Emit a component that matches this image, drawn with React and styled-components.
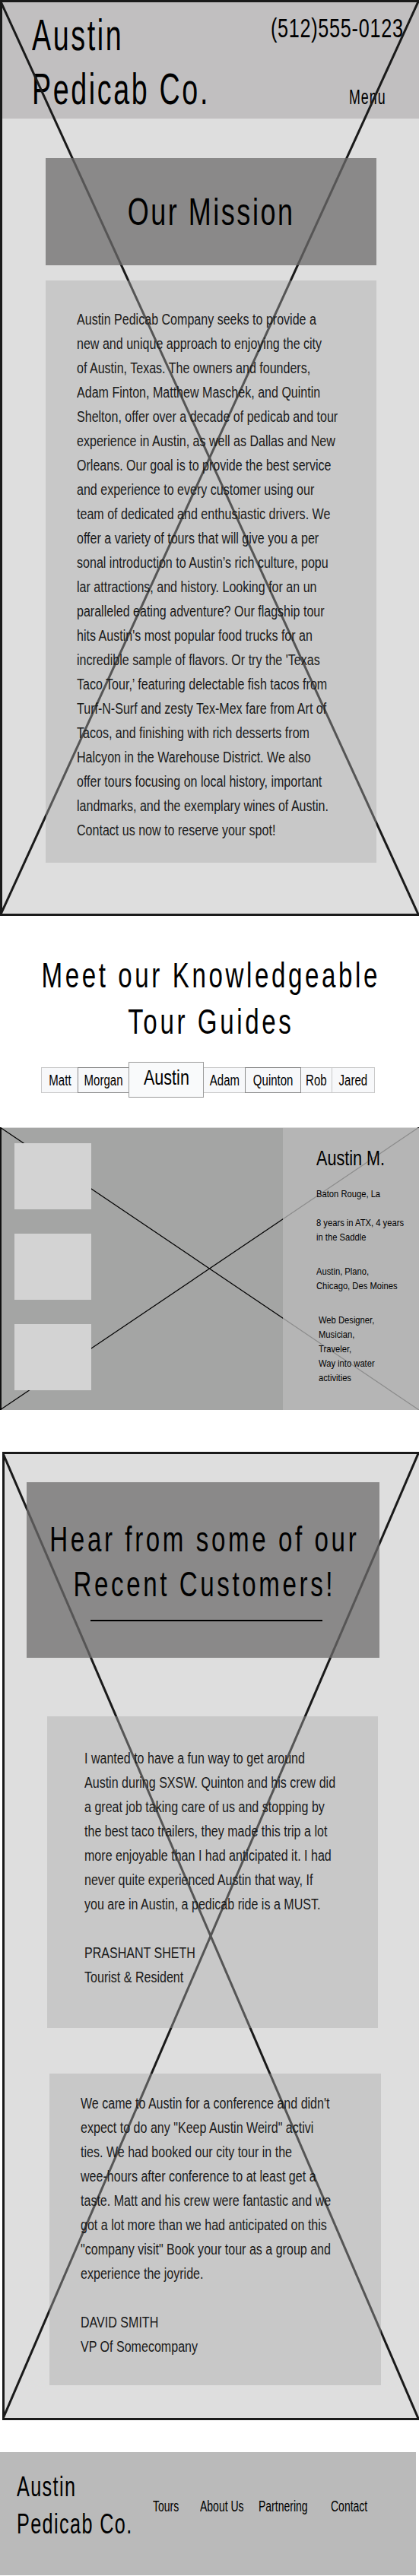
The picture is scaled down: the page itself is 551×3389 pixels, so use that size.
import React from "react";
import styled, { createGlobalStyle, css } from "styled-components";

const FONT = '"Liberation Sans", Arial, sans-serif';

const GlobalStyle = createGlobalStyle`
  html, body { margin: 0; padding: 0; background: #ffffff; }
  body { overflow-x: hidden; font-family: ${FONT}; color: #111; }
  * { box-sizing: border-box; }
`;

/* horizontal squeeze: the reference uses a very condensed face */
const squeeze = (s, origin = "left") => css`
  transform: scaleX(${s});
  transform-origin: ${origin} center;
  white-space: nowrap;
`;

const Page = styled.div`
  width: 551px;
  font-family: ${FONT};
`;

/* ---------- X placeholder drawing ---------- */
const XSvg = styled.svg`
  position: absolute;
  top: ${(p) => p.$top}px;
  left: ${(p) => p.$left}px;
  width: calc(100% - ${(p) => p.$left}px);
  height: calc(100% - ${(p) => p.$top + p.$bottom}px);
  pointer-events: none;
  z-index: 1;
`;

function XMark({ top = 0, left = 0, bottom = 0, stroke = "#1a1a1a", width = 3 }) {
  return (
    <XSvg $top={top} $left={left} $bottom={bottom} viewBox="0 0 100 100" preserveAspectRatio="none">
      <line x1="0" y1="0" x2="100" y2="100" stroke={stroke} strokeWidth={width} vectorEffect="non-scaling-stroke" />
      <line x1="100" y1="0" x2="0" y2="100" stroke={stroke} strokeWidth={width} vectorEffect="non-scaling-stroke" />
    </XSvg>
  );
}

/* ---------- Hero ---------- */
const Hero = styled.section`
  position: relative;
  border: 3px solid #1a1a1a;
  border-right: none;
  background: #dedede;
`;

const Header = styled.header`
  height: 153px;
  background: #c1bfc0;
  display: flex;
  justify-content: space-between;
  padding: 8px 20px 11px 39px;
`;

const Logo = styled.div`
  flex: 0 1 auto;
  min-width: 0;
  width: ${(p) => p.$w}px;
  font-size: ${(p) => p.$size}px;
  line-height: ${(p) => p.$lh}px;
  letter-spacing: ${(p) => p.$ls}px;
  color: #000;
  ${(p) => squeeze(p.$sx, "left")}
`;

const HeaderRight = styled.div`
  flex: 0 0 auto;
  display: flex;
  flex-direction: column;
  align-items: flex-end;
  justify-content: space-between;
`;

const Phone = styled.div`
  font-size: 35px;
  line-height: 1;
  letter-spacing: 1px;
  margin-top: 8px;
  color: #000;
  ${squeeze(0.72, "right")}
`;

const MenuLink = styled.div`
  font-size: 27px;
  line-height: 1;
  letter-spacing: 1.5px;
  margin: 0 23px 3px 0;
  color: #000;
  ${squeeze(0.66, "right")}
`;

const HeroBody = styled.div`
  padding: 52px 56px 67px 57px;
`;

const TitleBox = styled.div`
  position: relative;
  z-index: 2;
  height: 141px;
  background: rgba(108, 106, 107, 0.74);
  display: flex;
  align-items: center;
  justify-content: center;
`;

const BoxTitle = styled.h1`
  margin: 0;
  font-weight: 400;
  font-size: 50px;
  line-height: 1;
  letter-spacing: 3.5px;
  color: #000;
  ${squeeze(0.72, "center")}
`;

const TextPanel = styled.div`
  position: relative;
  z-index: 2;
  margin-top: 20px;
  background: rgba(169, 169, 169, 0.41);
  padding: 35px 20px 27px 41px;
`;

const BodyText = styled.p`
  margin: 0;
  font-size: 19.5px;
  line-height: 32px;
  color: #1a1a1a;
  ${squeeze(0.823, "left")}
`;

/* ---------- Guides heading + tabs ---------- */
const SectionTitle = styled.h2`
  margin: ${(p) => p.$mt || 0}px 0 0;
  display: flex;
  flex-direction: column;
  align-items: center;
  font-weight: 400;
  font-size: 46px;
  line-height: ${(p) => p.$lh}px;
  letter-spacing: 5px;
  color: #000;
  ${squeeze(0.72, "center")}
`;

const TitleLine = styled.span`
  display: block;
  margin-right: -5px;
`;

const Tabs = styled.nav`
  margin-top: 22px;
  display: flex;
  align-items: center;
  padding-left: 55px;
`;

const Tab = styled.div`
  width: ${(p) => p.$w}px;
  height: ${(p) => (p.$active ? 47 : 34)}px;
  margin-left: -1px;
  display: flex;
  justify-content: center;
  border: 1px solid ${(p) => (p.$active ? "#9c9c9c" : p.$dark ? "#8a8a8a" : "#c9c9c9")};
  background: ${(p) => (p.$active ? "#f9fafb" : "#f7f8fa")};
  font-size: ${(p) => (p.$active ? 28 : 19.5)}px;
  line-height: ${(p) => (p.$active ? 39 : 32)}px;
  color: #000;
  position: relative;
  z-index: ${(p) => (p.$active ? 2 : p.$dark ? 1 : 0)};
`;

const TabLabel = styled.span`
  display: inline-block;
  ${squeeze(0.77, "center")}
`;

/* ---------- Guide card ---------- */
const Guides = styled.section`
  position: relative;
  margin-top: 39px;
  height: 372px;
  background: #a4a5a4;
  border-top: 1px solid #dcdcdc;
  border-left: 2px solid #111;
  display: grid;
  grid-template-columns: 370px 1fr;
`;

const Thumbs = styled.div`
  position: relative;
  z-index: 2;
  display: flex;
  flex-direction: column;
  gap: 32px;
  padding: 20px 0 0 17px;
`;

const Thumb = styled.div`
  width: 101px;
  height: 87px;
  background: #d3d3d3;
`;

const GuideInfo = styled.div`
  position: relative;
  z-index: 2;
  background: rgba(187, 187, 187, 0.75);
  padding: 24px 6px 0 44px;
`;

const GuideName = styled.h3`
  margin: 0;
  font-weight: 400;
  font-size: 27px;
  line-height: 32px;
  color: #000;
  ${squeeze(0.8, "left")}
`;

const GuideFact = styled.p`
  margin: ${(p) => p.$mt}px 0 0 ${(p) => p.$indent || 0}px;
  font-size: 13.5px;
  line-height: 19px;
  color: #000;
  ${squeeze(0.83, "left")}
`;

/* ---------- Reviews ---------- */
const Reviews = styled.section`
  position: relative;
  margin: 55px 0 0 3px;
  border: 3px solid #1a1a1a;
  border-right: none;
  background: #dedede;
  padding: 37px 0 43px;
`;

const ReviewsHead = styled.div`
  position: relative;
  z-index: 2;
  margin-left: 29px;
  width: 464px;
  height: 231px;
  padding-top: 46px;
  background: rgba(108, 106, 107, 0.74);
`;

const Rule = styled.div`
  width: 305px;
  height: 2px;
  margin: 17px 0 0 84px;
  background: #000;
`;

const ReviewCard = styled.div`
  position: relative;
  z-index: 2;
  margin: ${(p) => p.$mt}px 0 0 ${(p) => p.$ml}px;
  width: ${(p) => p.$w}px;
  height: 410px;
  padding: ${(p) => p.$pt}px 10px 0 ${(p) => p.$pl}px;
  background: rgba(169, 169, 169, 0.41);
`;

const Author = styled(BodyText)`
  margin-top: 32px;
`;

/* ---------- Footer ---------- */
const Footer = styled.footer`
  margin-top: 42px;
  width: 547px;
  height: 162px;
  background: #bababa;
  padding: 21px 0 0 22px;
  display: flex;
  align-items: flex-start;
`;

const FooterRow = styled.div`
  display: flex;
  align-items: center;
`;

const FooterNav = styled.nav`
  display: flex;
  padding-top: 3px;
`;

const FooterLink = styled.a`
  display: block;
  width: ${(p) => (p.$w ? `${p.$w}px` : "auto")};
  font-size: 20px;
  line-height: 21px;
  color: #000;
  text-decoration: none;
  ${squeeze(0.7, "left")}
`;

const Lines = ({ lines }) =>
  lines.map((l, i) => (
    <React.Fragment key={i}>
      {l}
      {i < lines.length - 1 && <br />}
    </React.Fragment>
  ));

const MISSION = [
  "Austin Pedicab Company seeks to provide a",
  "new and unique approach to enjoying the city",
  "of Austin, Texas. The owners and founders,",
  "Adam Finton, Matthew Maschek, and Quintin",
  "Shelton, offer over a decade of pedicab and tour",
  "experience in Austin, as well as Dallas and New",
  "Orleans. Our goal is to provide the best service",
  "and experience to every customer using our",
  "team of dedicated and enthusiastic drivers. We",
  "offer a variety of tours that will give you a per",
  "sonal introduction to Austin\u2019s rich culture, popu",
  "lar attractions, and history. Looking for an un",
  "paralleled eating adventure? Our flagship tour",
  "hits Austin's most popular food trucks for an",
  "incredible sample of flavors. Or try the 'Texas",
  "Taco Tour,\u2019 featuring delectable fish tacos from",
  "Turf-N-Surf and zesty Tex-Mex fare from Art of",
  "Tacos, and finishing with rich desserts from",
  "Halcyon in the Warehouse District. We also",
  "offer tours focusing on local history, important",
  "landmarks, and the exemplary wines of Austin.",
  "Contact us now to reserve your spot!",
];

const REVIEW_1 = [
  "I wanted to have a fun way to get around",
  "Austin during SXSW. Quinton and his crew did",
  "a great job taking care of us and stopping by",
  "the best taco trailers, they made this trip a lot",
  "more enjoyable than I had anticipated it. I had",
  "never quite experienced Austin that way, If",
  "you are in Austin, a pedicab ride is a MUST.",
];

const REVIEW_2 = [
  "We came to Austin for a conference and didn't",
  'expect to do any "Keep Austin Weird" activi',
  "ties. We had booked our city tour in the",
  "wee-hours after conference to at least get a",
  "taste. Matt and his crew were fantastic and we",
  "got a lot more than we had anticipated on this",
  '"company visit" Book your tour as a group and',
  "experience the joyride.",
];

const TABS = [
  { name: "Matt", w: 49 },
  { name: "Morgan", w: 68, dark: true },
  { name: "Austin", w: 99, active: true },
  { name: "Adam", w: 56 },
  { name: "Quinton", w: 74, dark: true },
  { name: "Rob", w: 42 },
  { name: "Jared", w: 57 },
];

export default function App() {
  return (
    <Page>
      <GlobalStyle />

      <Hero>
        <Header>
          <Logo $w={250} $size={57} $lh={71} $ls={4} $sx={0.66}>
            Austin
            <br />
            Pedicab Co.
          </Logo>
          <HeaderRight>
            <Phone>(512)555-0123</Phone>
            <MenuLink>Menu</MenuLink>
          </HeaderRight>
        </Header>
        <XMark top={-3} left={-3} bottom={-3} stroke="#1a1a1a" width={3} />
        <HeroBody>
          <TitleBox>
            <BoxTitle>Our Mission</BoxTitle>
          </TitleBox>
          <TextPanel>
            <BodyText>
              <Lines lines={MISSION} />
            </BodyText>
          </TextPanel>
        </HeroBody>
      </Hero>

      <SectionTitle $mt={48} $lh={61}>
        <TitleLine>Meet our Knowledgeable</TitleLine>
        <TitleLine>Tour Guides</TitleLine>
      </SectionTitle>
      <Tabs>
        {TABS.map((t) => (
          <Tab key={t.name} $w={t.w} $active={t.active} $dark={t.dark}>
            <TabLabel>{t.name}</TabLabel>
          </Tab>
        ))}
      </Tabs>

      <Guides>
        <XMark top={-1} left={-2} bottom={0} stroke="#000" width={1.2} />
        <Thumbs>
          <Thumb />
          <Thumb />
          <Thumb />
        </Thumbs>
        <GuideInfo>
          <GuideName>Austin M.</GuideName>
          <GuideFact $mt={21}>Baton Rouge, La</GuideFact>
          <GuideFact $mt={19}>
            8 years in ATX, 4 years
            <br />
            in the Saddle
          </GuideFact>
          <GuideFact $mt={26}>
            Austin, Plano,
            <br />
            Chicago, Des Moines
          </GuideFact>
          <GuideFact $mt={26} $indent={3}>
            Web Designer,
            <br />
            Musician,
            <br />
            Traveler,
            <br />
            Way into water
            <br />
            activities
          </GuideFact>
        </GuideInfo>
      </Guides>

      <Reviews>
        <XMark top={-3} left={-3} bottom={-3} stroke="#1a1a1a" width={3} />
        <ReviewsHead>
          <SectionTitle $lh={59}>
            <TitleLine>Hear from some of our</TitleLine>
            <TitleLine>Recent Customers!</TitleLine>
          </SectionTitle>
          <Rule />
        </ReviewsHead>
        <ReviewCard $mt={77} $ml={56} $w={435} $pt={39} $pl={49}>
          <BodyText>
            <Lines lines={REVIEW_1} />
          </BodyText>
          <Author>
            PRASHANT SHETH
            <br />
            Tourist &amp; Resident
          </Author>
        </ReviewCard>
        <ReviewCard $mt={60} $ml={59} $w={436} $pt={23} $pl={41}>
          <BodyText>
            <Lines lines={REVIEW_2} />
          </BodyText>
          <Author>
            DAVID SMITH
            <br />
            VP Of Somecompany
          </Author>
        </ReviewCard>
      </Reviews>

      <Footer>
        <FooterRow>
          <Logo $w={179} $size={36} $lh={49} $ls={2} $sx={0.7}>
            Austin
            <br />
            Pedicab Co.
          </Logo>
          <FooterNav>
            <FooterLink $w={62}>Tours</FooterLink>
            <FooterLink $w={77}>About Us</FooterLink>
            <FooterLink $w={95}>Partnering</FooterLink>
            <FooterLink>Contact</FooterLink>
          </FooterNav>
        </FooterRow>
      </Footer>
    </Page>
  );
}
